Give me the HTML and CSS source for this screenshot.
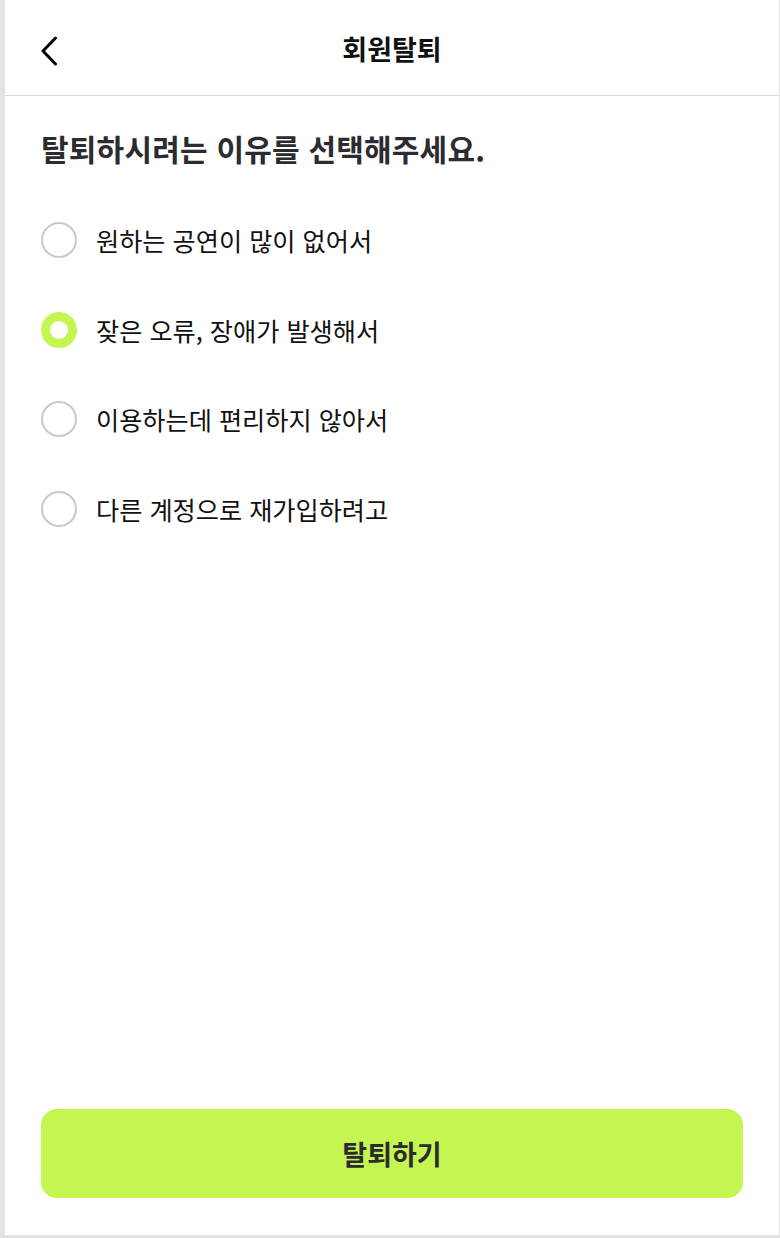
FILE: index.html
```html
<!DOCTYPE html>
<html lang="ko">
<head>
  <meta charset="UTF-8">
  <meta name="viewport" content="width=device-width, initial-scale=1">
  <title>회원탈퇴</title>
  <link rel="stylesheet" href="styles.css">
</head>
<body>
  <div class="page">
    <!-- 상단 헤더 -->
    <header class="header">
      <button class="back-btn" aria-label="뒤로가기">
        <svg width="18" height="30" viewBox="0 0 18 30">
          <path d="M15.5 2 L3 15 L15.5 28" fill="none" stroke="#000" stroke-width="3" stroke-linecap="round" stroke-linejoin="round"/>
        </svg>
      </button>
      <h1 class="title">회원탈퇴</h1>
    </header>

    <main class="content">
      <h2 class="question">탈퇴하시려는 이유를 선택해주세요.</h2>

      <ul class="reasons">
        <li class="reason">
          <span class="radio"></span>
          <span class="label">원하는 공연이 많이 없어서</span>
        </li>
        <li class="reason selected">
          <span class="radio"></span>
          <span class="label">잦은 오류, 장애가 발생해서</span>
        </li>
        <li class="reason">
          <span class="radio"></span>
          <span class="label">이용하는데 편리하지 않아서</span>
        </li>
        <li class="reason">
          <span class="radio"></span>
          <span class="label">다른 계정으로 재가입하려고</span>
        </li>
      </ul>

      <button class="submit-btn">탈퇴하기</button>
    </main>
  </div>
</body>
</html>
```

FILE: styles.css
```css
* {
  box-sizing: border-box;
}
body {
  margin: 0;
  padding: 0 1px 0 5px;
  background: #e3e3e6;
  font-family: "Noto Sans CJK KR", "Noto Sans", sans-serif;
}
.page {
  background: #ffffff;
  height: 1235px;
  display: flex;
  flex-direction: column;
}
.header {
  position: relative;
  height: 96px;
  border-bottom: 1px solid #dcdcdc;
  display: flex;
  align-items: center;
  justify-content: center;
}
.back-btn {
  position: absolute;
  left: 35px;
  top: 36px;
  padding: 0;
  border: none;
  background: none;
  width: 18px;
  height: 30px;
}
.back-btn svg {
  display: block;
}
.title {
  margin: 0;
  font-size: 27px;
  font-weight: 700;
  color: #111111;
  line-height: 36px;
  margin-top: 3px;
}
.content {
  flex: 1;
  display: flex;
  flex-direction: column;
  padding: 32px 36px 37px;
}
.question {
  margin: 0;
  font-size: 30px;
  font-weight: 700;
  line-height: 40px;
  color: #2b2b30;
  letter-spacing: 0.2px;
}
.reasons {
  list-style: none;
  margin: 54px 0 0;
  padding: 0;
  display: flex;
  flex-direction: column;
  gap: 53.7px;
}
.reason {
  display: flex;
  align-items: center;
  gap: 19px;
  height: 36px;
}
.radio {
  width: 36px;
  height: 36px;
  border-radius: 50%;
  border: 2px solid #c9c9cd;
  flex-shrink: 0;
}
.reason.selected .radio {
  border: 9px solid #c5f550;
}
.label {
  font-size: 25.2px;
  color: #111111;
  line-height: 34px;
}
.submit-btn {
  margin-top: auto;
  height: 89px;
  border: none;
  border-radius: 16px;
  background: #c5f550;
  font-family: inherit;
  font-size: 27px;
  font-weight: 700;
  color: #2b2b30;
}
```
